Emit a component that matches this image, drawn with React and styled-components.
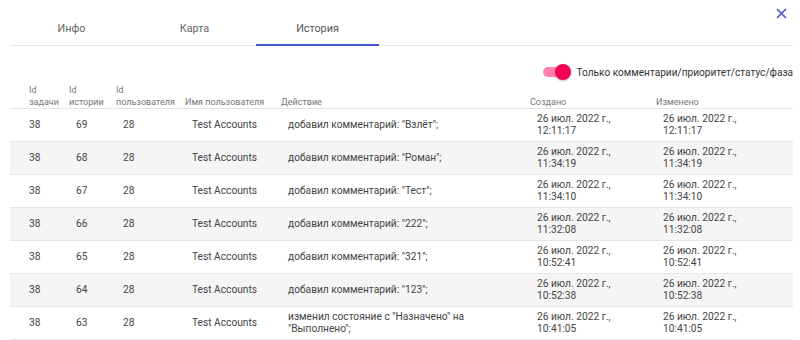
import styled, { createGlobalStyle } from 'styled-components'

const Global = createGlobalStyle`
  body {
    margin: 0;
    background: #fff;
    font-family: Roboto, 'Liberation Sans', sans-serif;
  }
`

const Dialog = styled.div`
  width: 800px;
  height: 340px;
  overflow: hidden;
  padding: 0 7px 0 10px;
  box-sizing: border-box;
  position: relative;
`

const Close = styled.button`
  position: absolute;
  top: 6px;
  right: 12px;
  width: 14px;
  height: 14px;
  padding: 0;
  border: 0;
  background: none;
  display: flex;
  align-items: center;
  justify-content: center;
`

const Tabs = styled.div`
  display: flex;
  margin-top: 12px;
  border-bottom: 1px solid #e6e6e6;
`

const Tab = styled.div`
  width: 123px;
  height: 34px;
  display: flex;
  align-items: center;
  justify-content: center;
  font-size: 10.8px;
  color: ${(p) => (p.$active ? '#555' : '#666')};
  border-bottom: 2px solid ${(p) => (p.$active ? '#4657c4' : 'transparent')};
  margin-bottom: -1px;
  box-sizing: border-box;
`

const FilterRow = styled.div`
  display: flex;
  justify-content: flex-end;
  align-items: center;
  gap: 7px;
  margin-top: 19px;
`

const Switch = styled.div`
  position: relative;
  width: 27px;
  height: 14px;
  display: flex;
  align-items: center;
`

const Track = styled.div`
  width: 24px;
  height: 10px;
  border-radius: 5px;
  background: #ff80ab;
`

const Thumb = styled.div`
  position: absolute;
  right: -1px;
  top: -1px;
  width: 16px;
  height: 16px;
  border-radius: 50%;
  background: #f50057;
  box-shadow: 0 1px 2px rgba(0, 0, 0, 0.25);
`

const FilterLabel = styled.span`
  font-size: 10.1px;
  color: #333;
`

const Table = styled.table`
  width: 783px;
  border-collapse: collapse;
  table-layout: fixed;
  margin-top: 5px;
`

const Th = styled.th`
  text-align: left;
  vertical-align: bottom;
  font-weight: 400;
  font-size: 9px;
  line-height: 12px;
  color: #777;
  padding: 0 0 0 ${(p) => (p.$first ? '19px' : '4px')};
  border-bottom: 1px solid #e6e6e6;
`

const Tr = styled.tr`
  background: ${(p) => (p.$alt ? '#f5f5f5' : '#fff')};
  border-bottom: 1px solid #e6e6e6;
`

const Td = styled.td`
  height: 32px;
  font-size: 10.2px;
  line-height: 12.5px;
  color: #444;
  padding: 0 4px 0 ${(p) => (p.$first ? '19px' : '11px')};
  vertical-align: middle;
`

const cols = [55, 47, 69, 96, 249, 126, 141]

const rows = [
  ['69', 'добавил комментарий: "Взлёт";', '12:11:17'],
  ['68', 'добавил комментарий: "Роман";', '11:34:19'],
  ['67', 'добавил комментарий: "Тест";', '11:34:10'],
  ['66', 'добавил комментарий: "222";', '11:32:08'],
  ['65', 'добавил комментарий: "321";', '10:52:41'],
  ['64', 'добавил комментарий: "123";', '10:52:38'],
  ['63', 'изменил состояние с "Назначено" на "Выполнено";', '10:41:05'],
]

function DateCell({ time }) {
  return (
    <Td>
      26 июл. 2022 г.,
      <br />
      {time}
    </Td>
  )
}

export default function App() {
  return (
    <Dialog>
      <Global />
      <Close aria-label='Закрыть'>
        <svg width='11' height='11' viewBox='0 0 11 11'>
          <path d='M1 1L10 10M10 1L1 10' stroke='#4657c4' strokeWidth='1.6' />
        </svg>
      </Close>

      <Tabs>
        <Tab>Инфо</Tab>
        <Tab>Карта</Tab>
        <Tab $active>История</Tab>
      </Tabs>

      <FilterRow>
        <Switch>
          <Track />
          <Thumb />
        </Switch>
        <FilterLabel>Только комментарии/приоритет/статус/фаза</FilterLabel>
      </FilterRow>

      <Table>
        <colgroup>
          {cols.map((w, i) => (
            <col key={i} style={{ width: w }} />
          ))}
        </colgroup>
        <thead>
          <tr>
            <Th $first>Id<br />задачи</Th>
            <Th>Id<br />истории</Th>
            <Th>Id<br />пользователя</Th>
            <Th>Имя пользователя</Th>
            <Th>Действие</Th>
            <Th>Создано</Th>
            <Th>Изменено</Th>
          </tr>
        </thead>
        <tbody>
          {rows.map(([id, action, time], i) => (
            <Tr key={id} $alt={i % 2 === 1}>
              <Td $first>38</Td>
              <Td>{id}</Td>
              <Td>28</Td>
              <Td>Test Accounts</Td>
              <Td>{action}</Td>
              <DateCell time={time} />
              <DateCell time={time} />
            </Tr>
          ))}
        </tbody>
      </Table>
    </Dialog>
  )
}
